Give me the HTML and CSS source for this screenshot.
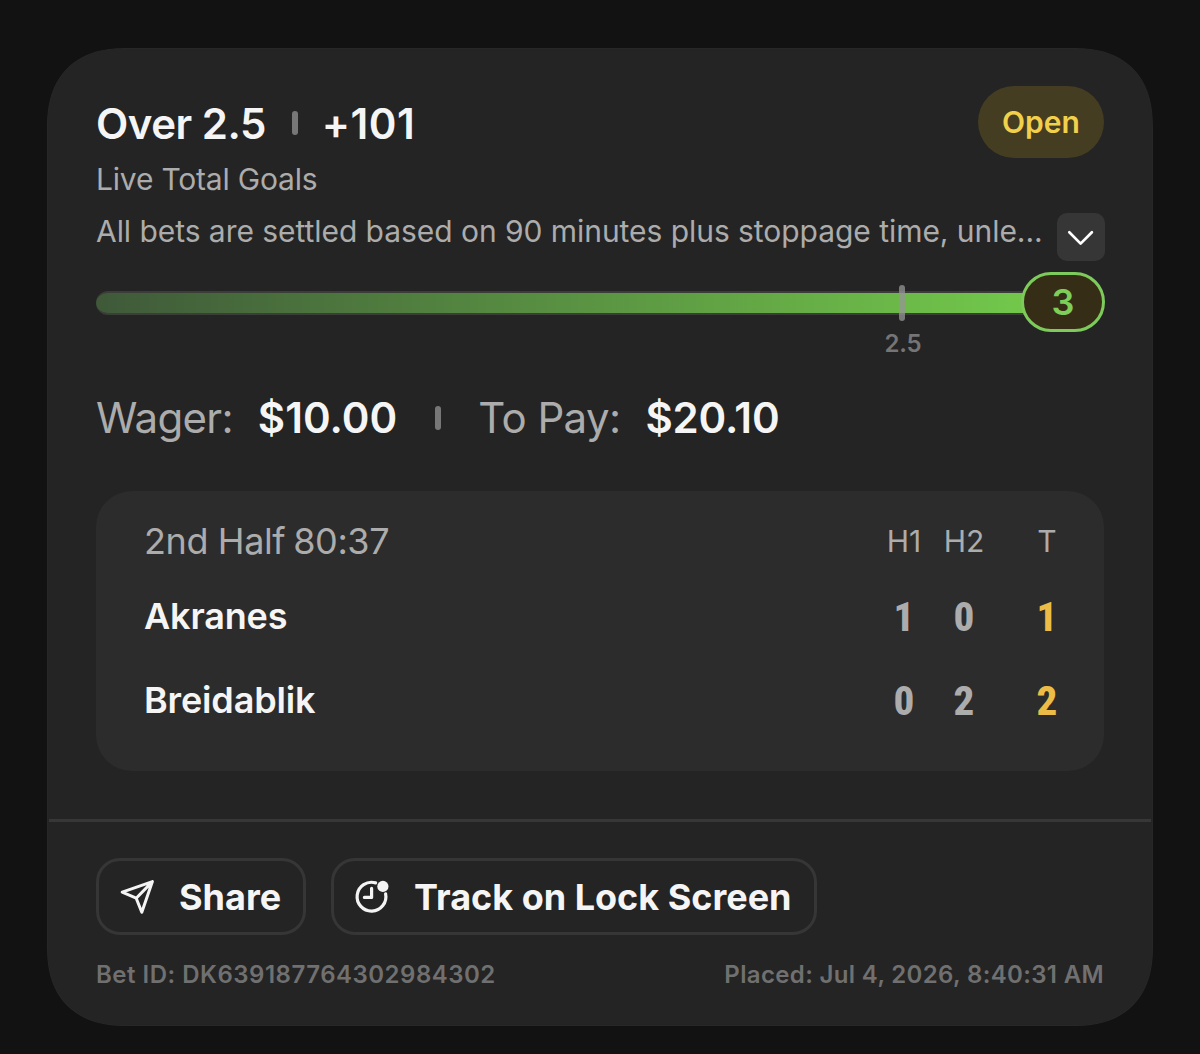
FILE: index.html
```html
<!DOCTYPE html>
<html lang="en">
<head>
<meta charset="utf-8">
<title>Bet slip</title>
<link rel="stylesheet" href="styles.css">
</head>
<body>
<main class="card">
  <section class="bet">
    <header class="head">
      <h1 class="title"><span class="pick">Over 2.5</span><i class="sep"></i><span class="odds">+101</span></h1>
      <span class="status">Open</span>
    </header>
    <p class="market">Live Total Goals</p>
    <div class="terms">
      <p class="terms-text">All bets are settled based on 90 minutes plus stoppage time, unle...</p>
      <button class="expand" aria-label="Expand">
        <svg width="48" height="48" viewBox="0 0 48 48" fill="none" stroke="#fff" stroke-width="2.7" stroke-linecap="round" stroke-linejoin="round"><path d="M12.3 19.3 23.6 30.6 34.9 19.3"/></svg>
      </button>
    </div>
    <div class="progress">
      <div class="bar"></div>
      <i class="tick"></i>
      <span class="tick-label">2.5</span>
      <span class="current">3</span>
    </div>
    <div class="money">
      <span class="label wager">Wager:</span><b class="amount a1">$10.00</b><i class="sep"></i><span class="label pay">To Pay:</span><b class="amount a2">$20.10</b>
    </div>
    <div class="score">
      <div class="row top"><span class="clock">2nd Half<span class="time">80:37</span></span><span class="col">H1</span><span class="col">H2</span><span class="col total">T</span></div>
      <div class="row"><span class="team akr">Akranes</span><span class="num">1</span><span class="num">0</span><span class="num total">1</span></div>
      <div class="row"><span class="team bre">Breidablik</span><span class="num">0</span><span class="num">2</span><span class="num total">2</span></div>
    </div>
  </section>
  <footer class="foot">
    <div class="actions">
      <button class="btn share">
        <svg width="36" height="36" viewBox="0 0 36 36" fill="none" stroke="#f4f4f4" stroke-width="3" stroke-linecap="round" stroke-linejoin="round"><path d="M3.2 13.2 33.4 2.6 22.8 33.3 17.2 19.2ZM17.2 19.2 33.4 2.6"/></svg>
        <span>Share</span>
      </button>
      <button class="btn track">
        <svg width="36" height="36" viewBox="0 0 36 36" fill="none" stroke="#f4f4f4" stroke-width="3.2" stroke-linecap="round" stroke-linejoin="round"><path d="M21.6 3.9A14.4 14.4 0 1 0 31.6 14.8M17.6 9.4V18.4H10.4"/><circle cx="28.9" cy="7.4" r="5.6" fill="#f4f4f4" stroke="none"/></svg>
        <span>Track on Lock Screen</span>
      </button>
    </div>
    <div class="meta"><span class="id">Bet ID: DK639187764302984302</span><span class="placed">Placed: Jul 4, 2026, 8:40:31 AM</span></div>
  </footer>
</main>
</body>
</html>
```
FILE: styles.css
```css
* { box-sizing: border-box; margin: 0; padding: 0; }
body {
  height: 1054px;
  padding: 48px 47px 0;
  background: #121212;
  font-family: Inter, sans-serif;
  color: #f5f5f5;
  white-space: nowrap;
  overflow: hidden;
}
button { font: inherit; color: inherit; background: none; border: 0; }
svg { display: block; flex: none; }
.card {
  height: 978px;
  border: 1px solid #272727;
  border-radius: 80px;
  corner-shape: superellipse(1.25);
  background: #242424;
}
.bet { height: 770px; padding: 37px 48px 0; }
.head { display: flex; justify-content: space-between; height: 72px; }
.title { display: flex; align-items: center; height: 74px; font-size: 42px; font-weight: 600; }
.pick { letter-spacing: -0.5px; }
.odds { letter-spacing: 0.5px; }
.sep { width: 6px; height: 24px; border-radius: 3px; background: #777; }
.title .sep { margin: 0 24px 0 26px; }
.status {
  width: 126px;
  height: 72px;
  border-radius: 36px;
  background: #443d22;
  color: #f1d04b;
  font-size: 30px;
  font-weight: 600;
  line-height: 72px;
  text-align: center;
}
.market { height: 46px; font-size: 30px; line-height: 43px; color: #acacac; letter-spacing: -0.2px; }
.terms { display: flex; justify-content: space-between; height: 60px; }
.terms-text { font-size: 30px; line-height: 54px; color: #acacac; letter-spacing: -0.05px; }
.expand { width: 48px; height: 48px; margin: 9px -1px 0 0; border-radius: 10px; background: #363636; }
.progress { position: relative; height: 90px; padding-top: 27px; }
.bar {
  height: 24px;
  width: 940px;
  border: 2px solid #3b3d39;
  border-left: 0;
  border-right: 0;
  border-radius: 12px 0 0 12px;
  background: linear-gradient(90deg, #3f5939, #73c94b);
}
.tick { position: absolute; left: 803px; top: 21px; width: 6px; height: 36px; border-radius: 3px; background: rgba(150, 150, 150, 0.75); }
.tick-label { position: absolute; left: 777px; top: 65px; width: 60px; font-size: 24px; line-height: 30px; font-weight: 600; letter-spacing: -0.2px; text-align: center; color: #757575; }
.current {
  position: absolute;
  right: -1px;
  top: 8px;
  width: 84px;
  height: 60px;
  border: 3px solid #7dcc5b;
  border-radius: 30px;
  background: #362d16;
  color: #7dcf5a;
  font-size: 36px;
  font-weight: 600;
  line-height: 54px;
  text-align: center;
}
.money { display: flex; align-items: center; height: 130px; font-size: 42px; padding-bottom: 3px; }
.money .sep { margin: 0 37px 0 38px; }
.label { color: #acacac; letter-spacing: -0.7px; }
.pay { letter-spacing: -0.6px; }
.amount { font-weight: 600; margin-left: 25px; letter-spacing: 0.05px; }
.a2 { letter-spacing: -0.2px; }
.score { height: 280px; margin-top: 7px; padding: 8px 36px 0 48px; border-radius: 36px; background: #2c2c2c; }
.row { display: grid; grid-template-columns: 1fr 60px 60px 74px; grid-auto-rows: 84px; align-items: center; }
.row.top { margin-bottom: -9px; }
.clock { font-size: 36px; color: #acacac; letter-spacing: -0.4px; }
.time { margin-left: 8px; }
.col { font-size: 30px; color: #acacac; text-align: center; }
.col.total, .num.total { padding-left: 32px; }
.team { font-size: 36px; font-weight: 600; letter-spacing: -0.15px; }
.num { padding-top: 1px; font-family: Roboto, sans-serif; font-size: 41px; font-weight: 800; font-stretch: 75%; color: #acacac; text-align: center; }
.num.total { color: #ecbc47; }
.foot { padding: 36px 47px 0; border-top: 3px solid #373737; margin: 0 1px; }
.actions { display: flex; gap: 25px; }
.btn {
  display: flex;
  align-items: center;
  gap: 24px;
  height: 77px;
  border: 3px solid #363636;
  border-radius: 24px;
  padding: 0 20px;
  font-size: 36px;
  font-weight: 700;
}
.share { width: 210px; }
.track { width: 486px; }
.meta { display: flex; justify-content: space-between; font-size: 24px; font-weight: 600; line-height: 30px; margin-top: 25px; color: #707070; }
.id { letter-spacing: 0.5px; }
.placed { letter-spacing: 0.35px; }
```
